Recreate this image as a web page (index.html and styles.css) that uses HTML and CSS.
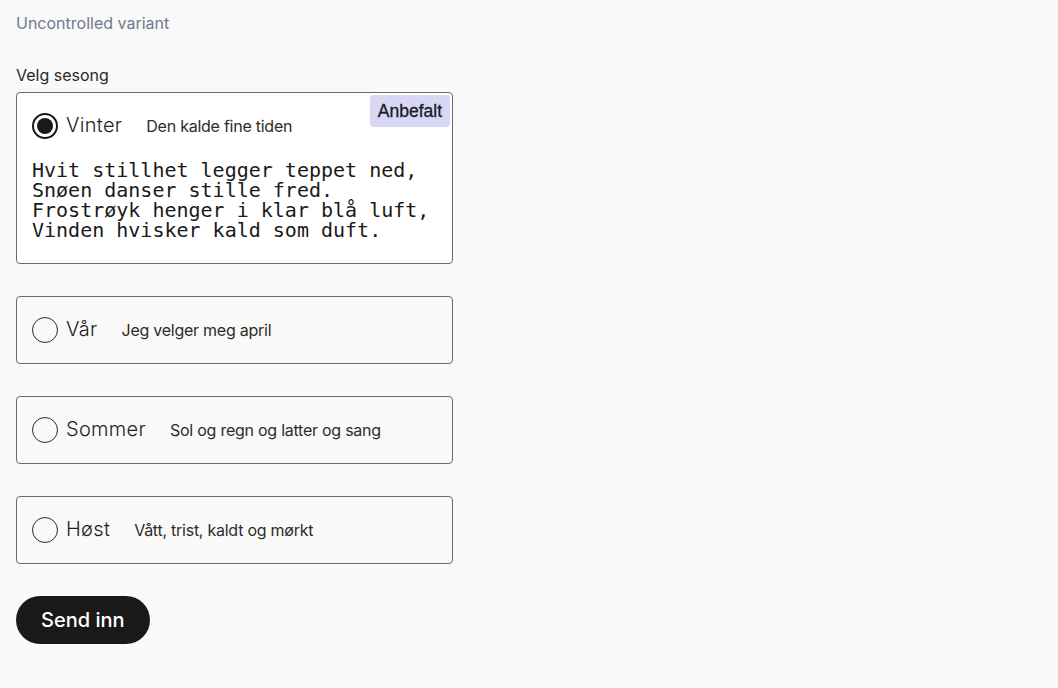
FILE: index.html
```html
<!DOCTYPE html>
<html lang="no">
<head>
<meta charset="utf-8">
<title>Velg sesong</title>
<link rel="stylesheet" href="styles.css">
</head>
<body>
<main class="page">
  <p class="variant">Uncontrolled variant</p>
  <form class="form">
    <fieldset class="group">
      <legend class="legend">Velg sesong</legend>
      <div class="cards">
        <label class="card card--checked">
          <span class="badge">Anbefalt</span>
          <span class="row">
            <span class="radio radio--checked"><span class="dot"></span></span>
            <span class="title">Vinter</span>
            <span class="desc">Den kalde fine tiden</span>
          </span>
          <pre class="poem">Hvit stillhet legger teppet ned,
Snøen danser stille fred.
Frostrøyk henger i klar blå luft,
Vinden hvisker kald som duft.</pre>
        </label>
        <label class="card">
          <span class="row">
            <span class="radio"></span>
            <span class="title">Vår</span>
            <span class="desc">Jeg velger meg april</span>
          </span>
        </label>
        <label class="card">
          <span class="row">
            <span class="radio"></span>
            <span class="title">Sommer</span>
            <span class="desc">Sol og regn og latter og sang</span>
          </span>
        </label>
        <label class="card">
          <span class="row">
            <span class="radio"></span>
            <span class="title">Høst</span>
            <span class="desc">Vått, trist, kaldt og mørkt</span>
          </span>
        </label>
      </div>
    </fieldset>
    <button type="button" class="submit">Send inn</button>
  </form>
</main>
</body>
</html>
```
FILE: styles.css
```css
* { box-sizing: border-box; }
html, body { margin: 0; padding: 0; }
body {
  background: #f9f9f9;
  font-family: Inter, "Noto Sans", sans-serif;
  color: #1d1c1a;
}
.page {
  padding: 12px 16px;
  width: 469px;
}
.variant {
  margin: 0;
  font-size: 16px;
  line-height: 22px;
  color: #6f7b8c;
  letter-spacing: 0;
}
.form { margin-top: 30px; }
.group {
  border: 0;
  margin: 0;
  padding: 0;
  min-width: 0;
}
.legend {
  padding: 0;
  font-size: 16px;
  line-height: 22px;
  letter-spacing: 0;
  margin-bottom: 6px;
  color: #2a2926;
}
.cards {
  display: flex;
  flex-direction: column;
  gap: 32px;
}
.card {
  position: relative;
  display: flex;
  flex-direction: column;
  border: 1px solid #6a6a6a;
  border-radius: 4px;
  padding: 15px;
  background: #f9f9f9;
}
.card--checked {
  background: #ffffff;
  padding-bottom: 23px;
}
.row {
  display: flex;
  align-items: center;
  height: 36px;
}
.radio {
  width: 26px;
  height: 26px;
  border-radius: 50%;
  border: 1.5px solid #2b2b2b;
  display: flex;
  align-items: center;
  justify-content: center;
  flex: none;
}
.radio--checked {
  border: 2px solid #1a1918;
}
.dot {
  width: 16px;
  height: 16px;
  border-radius: 50%;
  background: #1a1918;
}
.title {
  margin-left: 8px;
  font-size: 20px;
  line-height: 28px;
  font-weight: 300;
  letter-spacing: 0.3px;
  color: #1f1e1b;
  margin-top: -2px;
}
.desc {
  margin-left: 24px;
  font-size: 16px;
  line-height: 22px;
  letter-spacing: -0.25px;
  color: #2d2c29;
}
.badge {
  position: absolute;
  top: 2px;
  right: 2px;
  padding: 6px 8px;
  height: 32px;
  border-radius: 4px;
  background: #d8d7f5;
  font-family: "Liberation Sans", Arial, sans-serif;
  font-size: 17.5px;
  line-height: 20px;
  color: #1b1a1f;
  -webkit-text-stroke: 0.3px #1b1a1f;
}
.poem {
  margin: 16px 0 0 0;
  font-family: "DejaVu Sans Mono", monospace;
  font-size: 20px;
  line-height: 20px;
  color: #1a1a1a;
}
.submit {
  margin-top: 32px;
  height: 48px;
  padding: 0 25px;
  border: 0;
  border-radius: 24px;
  background: #1a1918;
  color: #ffffff;
  font-family: Inter, "Noto Sans", sans-serif;
  font-size: 20px;
  font-weight: 500;
  letter-spacing: 0;
  cursor: pointer;
}
```
